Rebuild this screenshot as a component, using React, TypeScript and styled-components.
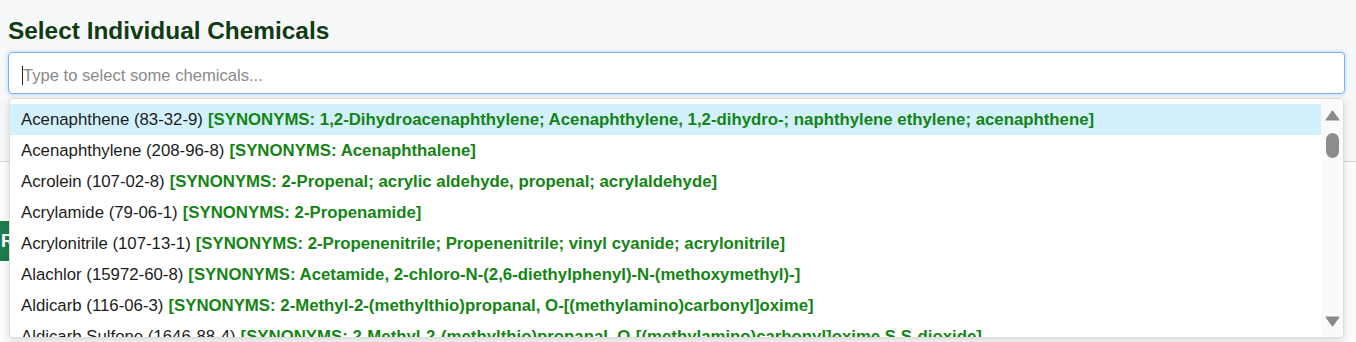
import React from 'react';
import styled, { createGlobalStyle } from 'styled-components';

const GlobalStyle = createGlobalStyle`
  html, body {
    margin: 0;
    padding: 0;
    background: #fcfcfd;
    font-family: "Liberation Sans", Arial, sans-serif;
  }
`;

const Page = styled.div`
  width: 1356px;
  height: 342px;
  overflow: hidden;
`;

const Panel = styled.section`
  background: #f7f8fa;
  border-bottom: 1px solid #d4d6d9;
  padding: 17px 11px 67px 8px;
`;

const Heading = styled.h2`
  margin: 0 0 8px 0;
  font-size: 24.4px;
  line-height: 27px;
  font-weight: 700;
  color: #0f3b12;
`;

const SelectWrap = styled.div`
  position: relative;
`;

const Control = styled.div`
  height: 40px;
  display: flex;
  align-items: center;
  padding: 5px 0 0 13px;
  box-sizing: border-box;
  height: 42px;
  background: #fff;
  border: 1px solid #74b3f0;
  border-radius: 4px;
  box-shadow: 0 0 4px rgba(90, 160, 240, 0.45);
`;

const Caret = styled.span`
  width: 1px;
  height: 19px;
  background: #222;
`;

const Placeholder = styled.span`
  font-size: 16.6px;
  color: #8a8a8a;
`;

const Menu = styled.div`
  position: absolute;
  left: 1px;
  right: 1px;
  top: calc(100% + 4px);
  height: 238px;
  display: flex;
  background: #fff;
  border: 1px solid #dcdcdc;
  border-radius: 4px;
  box-shadow: 0 3px 8px rgba(0, 0, 0, 0.14);
  overflow: hidden;
  z-index: 10;
`;

const OptionList = styled.ul`
  flex: 1;
  margin: 0;
  padding: 5px 0 0 0;
  list-style: none;
  overflow: hidden;
`;

const Option = styled.li<{ $active?: boolean }>`
  height: 31.14px;
  display: flex;
  align-items: center;
  padding-left: 11px;
  white-space: nowrap;
  font-size: 16.8px;
  color: #1c1c1c;
  background: ${(p) => (p.$active ? '#d3f1fc' : 'transparent')};
`;

const Synonyms = styled.b`
  margin-left: 5px;
  color: #148414;
`;

const Scrollbar = styled.div`
  width: 22px;
  display: flex;
  flex-direction: column;
  align-items: center;
  padding: 11px 0 10px;
  background: #fafafa;
`;

const Thumb = styled.div`
  width: 13px;
  height: 25px;
  margin-top: 12px;
  border-radius: 7px;
  background: #8c8c8c;
`;

const Spacer = styled.div`
  flex: 1;
`;

const Body = styled.div`
  padding: 59px 0 0 0;
`;

const RunButton = styled.button`
  height: 40px;
  padding: 0 20px 0 1px;
  border: none;
  border-radius: 0 4px 4px 0;
  background: #1d7d4d;
  color: #fff;
  font-family: inherit;
  font-size: 18px;
  font-weight: 700;
`;

const chemicals = [
  {
    name: 'Acenaphthene (83-32-9)',
    syn: '1,2-Dihydroacenaphthylene; Acenaphthylene, 1,2-dihydro-; naphthylene ethylene; acenaphthene',
  },
  { name: 'Acenaphthylene (208-96-8)', syn: 'Acenaphthalene' },
  { name: 'Acrolein (107-02-8)', syn: '2-Propenal; acrylic aldehyde, propenal; acrylaldehyde' },
  { name: 'Acrylamide (79-06-1)', syn: '2-Propenamide' },
  {
    name: 'Acrylonitrile (107-13-1)',
    syn: '2-Propenenitrile; Propenenitrile; vinyl cyanide; acrylonitrile',
  },
  {
    name: 'Alachlor (15972-60-8)',
    syn: 'Acetamide, 2-chloro-N-(2,6-diethylphenyl)-N-(methoxymethyl)-',
  },
  {
    name: 'Aldicarb (116-06-3)',
    syn: '2-Methyl-2-(methylthio)propanal, O-[(methylamino)carbonyl]oxime',
  },
  {
    name: 'Aldicarb Sulfone (1646-88-4)',
    syn: '2-Methyl-2-(methylthio)propanal, O-[(methylamino)carbonyl]oxime S,S-dioxide',
  },
  { name: 'Aldrin (309-00-2)', syn: 'HHDN; Octalene' },
];

const Arrow = ({ down }: { down?: boolean }) => (
  <svg width="15" height="11" viewBox="0 0 15 11">
    <path
      d={down ? 'M1 1 H14 L7.5 10 Z' : 'M7.5 1 L14 10 H1 Z'}
      fill="#8a8a8a"
      stroke="#8a8a8a"
      strokeWidth="1.2"
      strokeLinejoin="round"
    />
  </svg>
);

const App: React.FC = () => {
  return (
    <Page>
      <GlobalStyle />
      <Panel>
        <Heading>Select Individual Chemicals</Heading>
        <SelectWrap>
          <Control>
            <Caret />
            <Placeholder>Type to select some chemicals...</Placeholder>
          </Control>
          <Menu>
            <OptionList>
              {chemicals.map((c, i) => (
                <Option key={c.name} $active={i === 0}>
                  {c.name}
                  <Synonyms>[SYNONYMS: {c.syn}]</Synonyms>
                </Option>
              ))}
            </OptionList>
            <Scrollbar>
              <Arrow />
              <Thumb />
              <Spacer />
              <Arrow down />
            </Scrollbar>
          </Menu>
        </SelectWrap>
      </Panel>
      <Body>
        <RunButton>Run Comparison</RunButton>
      </Body>
    </Page>
  );
};

export default App;
